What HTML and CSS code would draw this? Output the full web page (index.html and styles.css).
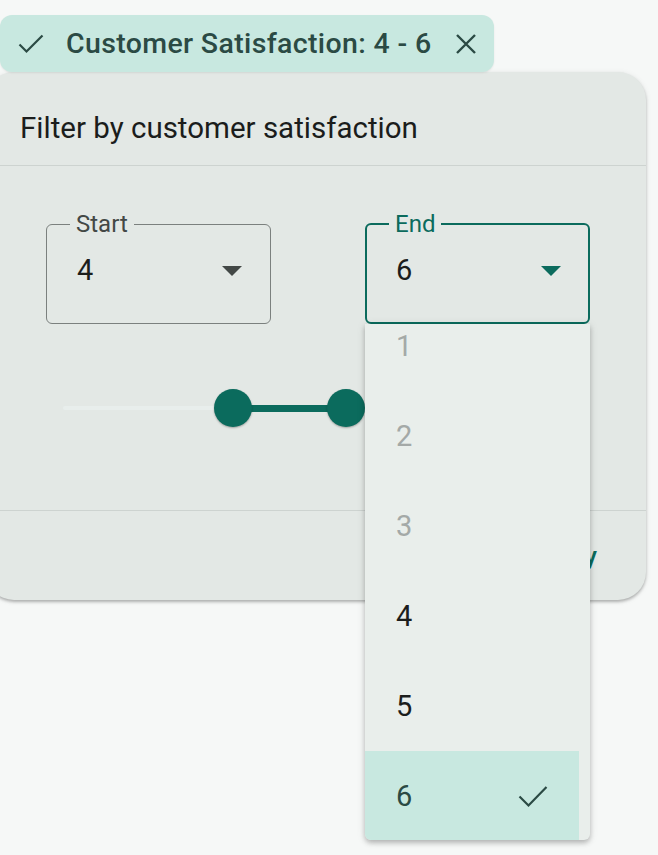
FILE: index.html
```html
<!DOCTYPE html>
<html>
<head>
<meta charset="utf-8">
<link rel="stylesheet" href="styles.css">
</head>
<body>
  <div class="chip">
    <svg class="chip-check" viewBox="0 0 26 20" width="26" height="20"><polyline points="1.5,10.5 8.5,17.5 24.5,1.5" fill="none" stroke="#2b4a44" stroke-width="2.2"/></svg>
    <span class="chip-text">Customer Satisfaction: 4 - 6</span>
    <svg class="chip-x" viewBox="0 0 22 22" width="22" height="22"><path d="M2 2 L20 20 M20 2 L2 20" stroke="#2b4a44" stroke-width="2.4" fill="none"/></svg>
  </div>

  <div class="card">
    <div class="card-header">Filter by customer satisfaction</div>
    <div class="card-body">
      <div class="field-row">
        <fieldset class="field">
          <legend>Start</legend>
          <div class="field-inner">
            <span class="field-value">4</span>
            <span class="arrow"></span>
          </div>
        </fieldset>
        <div class="field-wrap">
          <fieldset class="field field-active">
            <legend>End</legend>
            <div class="field-inner">
              <span class="field-value">6</span>
              <span class="arrow"></span>
            </div>
          </fieldset>
          <div class="menu">
            <ul class="menu-list">
              <li class="menu-item disabled">1</li>
              <li class="menu-item disabled">2</li>
              <li class="menu-item disabled">3</li>
              <li class="menu-item">4</li>
              <li class="menu-item">5</li>
              <li class="menu-item selected">6
                <svg class="menu-check" viewBox="0 0 30 24" width="30" height="24"><polyline points="1.5,12.5 10.5,21.5 28.5,3" fill="none" stroke="#2b4a44" stroke-width="2.2"/></svg>
              </li>
            </ul>
          </div>
        </div>
      </div>
      <div class="slider">
        <div class="track"></div>
        <div class="track-active" style="left:170px;width:113px"></div>
        <div class="thumb" style="left:151px"></div>
        <div class="thumb" style="left:264px"></div>
      </div>
    </div>
    <div class="card-footer">
      <span class="apply">Apply</span>
    </div>
  </div>
</body>
</html>
```
FILE: styles.css
```css
* { box-sizing: border-box; }
html, body { margin: 0; padding: 0; }
body {
  background: #f6f8f7;
  font-family: Roboto, "Noto Sans", sans-serif;
  width: 658px;
  height: 855px;
  overflow: hidden;
}

.chip {
  margin-top: 15px;
  height: 57px;
  width: 494px;
  background: #c8e8e0;
  border-radius: 12px;
  display: flex;
  align-items: center;
  padding-left: 18px;
  color: #2b4a44;
  box-shadow: 0 1px 2px rgba(0,0,0,0.08);
  position: relative;
  z-index: 2;
}
.chip-check { flex: none; margin-top: 1px; }
.chip-text {
  margin-left: 22px;
  font-size: 28.5px;
  font-weight: 500;
  letter-spacing: 0.35px;
  white-space: nowrap;
}
.chip-x { flex: none; margin-left: 24px; }

.card {
  margin-left: -14px;
  width: 660px;
  height: 528px;
  background: #e3e8e5;
  border-radius: 28px;
  box-shadow: 0 2px 3px rgba(0,0,0,0.25), 0 1px 6px rgba(0,0,0,0.08);
  display: flex;
  flex-direction: column;
}
.card-header {
  height: 94px;
  flex: none;
  display: flex;
  align-items: center;
  padding-top: 18px;
  padding-left: 34px;
  font-size: 29.5px;
  color: #1b1d1c;
  border-bottom: 1px solid #cdd3d0;
}
.card-body {
  flex: none;
  height: 345px;
  border-bottom: 1px solid #cdd3d0;
  padding-top: 44px;
}
.field-row {
  display: flex;
  gap: 94px;
  padding-left: 60px;
}
.field-wrap { position: relative; }
.field {
  margin: 0;
  width: 225px;
  height: 114px;
  border: 1px solid #7b807e;
  border-radius: 6px;
  padding: 0 0 0 23px;
  min-width: 0;
}
.field legend {
  padding: 0 6px;
  font-size: 24px;
  line-height: 28px;
  color: #434846;
}
.field-inner {
  display: flex;
  align-items: center;
  justify-content: space-between;
  padding: 14px 28px 0 7px;
}
.field-value {
  font-size: 29px;
  line-height: 36px;
  color: #1b1d1c;
}
.arrow {
  width: 0;
  height: 0;
  border-left: 10px solid transparent;
  border-right: 10px solid transparent;
  border-top: 10px solid #434846;
  margin-top: 2px;
}
.field-active {
  border: 2px solid #0b6b5d;
  padding-left: 22px;
}
.field-active legend { color: #0b6b5d; }
.field-active .field-inner { padding-left: 7px; padding-right: 27px; }
.field-active .arrow { border-top-color: #0b6b5d; }

.menu {
  position: absolute;
  top: 100%;
  left: 0;
  width: 225px;
  height: 516px;
  background: #e9eeeb;
  border-radius: 0 0 6px 6px;
  box-shadow: 0 3px 5px rgba(0,0,0,0.22), 0 1px 10px rgba(0,0,0,0.1);
  overflow: hidden;
  z-index: 5;
}
.menu-list {
  list-style: none;
  margin: -23px 11px 0 0;
  padding: 0;
}
.menu-item {
  height: 90px;
  display: flex;
  align-items: center;
  justify-content: space-between;
  padding: 0 31px;
  font-size: 29px;
  color: #1b1d1c;
}
.menu-item.disabled { color: #a4a9a7; }
.menu-item.selected {
  background: #c8e8e0;
  color: #2b4a44;
  height: 89px;
}

.slider {
  position: relative;
  margin-left: 77px;
  margin-top: 65px;
  width: 517px;
  height: 38px;
}
.track {
  position: absolute;
  left: 0;
  right: 0;
  top: 17px;
  height: 4px;
  background: #e8eeec;
  border-radius: 2px;
}
.track-active {
  position: absolute;
  top: 16px;
  height: 7px;
  background: #0b6b5d;
}
.thumb {
  position: absolute;
  top: 0;
  width: 38px;
  height: 38px;
  border-radius: 50%;
  background: #0b6b5d;
  box-shadow: 0 1px 2px rgba(0,0,0,0.3);
}

.card-footer {
  flex: 1;
  display: flex;
  align-items: center;
  justify-content: flex-end;
  padding-right: 49px;
}
.apply {
  font-size: 26px;
  font-weight: 500;
  color: #0b6b5d;
}
```
